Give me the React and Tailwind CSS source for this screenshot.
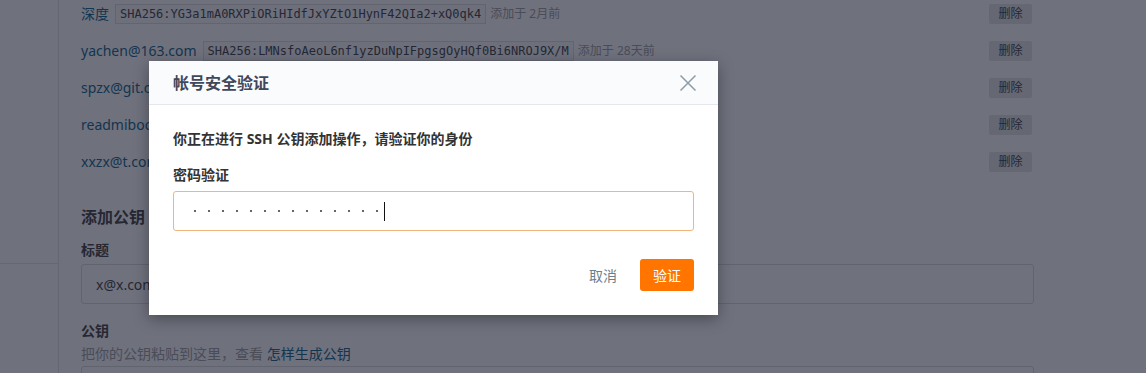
import React from 'react';

const keys = [
  { name: '深度', fp: 'SHA256:YG3a1mA0RXPiORiHIdfJxYZtO1HynF42QIa2+xQ0qk4', when: '添加于 2月前' },
  { name: 'yachen@163.com', fp: 'SHA256:LMNsfoAeoL6nf1yzDuNpIFpgsgOyHQf0Bi6NROJ9X/M', when: '添加于 28天前' },
  { name: 'spzx@git.com', fp: 'SHA256:Q2k8vD0aXbLw3mR7nT1yZpF5sHcJ9uE4oKiV6gN0tW8', when: '添加于 1年前' },
  { name: 'readmibook@qq.com', fp: 'SHA256:Hn3xT7pA0cR9sLmV2kQ8yZfW4bJ1uD6oGiE5tN0qX7c', when: '添加于 1年前' },
  { name: 'xxzx@t.com', fp: 'SHA256:Pw5yB2mK8rN0cT4vL7sQ1xZ9hF3jD6aGuE0iO2kR5nM', when: '添加于 2年前' },
];

const font = { fontFamily: '"Noto Sans", "Noto Sans CJK SC", sans-serif' };

const App = () => {
  return (
    <div className="relative w-full h-[373px] overflow-hidden bg-white text-[#333]" style={font}>
      {/* page under the dialog */}
      <div className="flex h-full">
        <aside className="w-[59px] shrink-0 border-r border-[#e3e3e3]">
          <div className="h-[264px] border-b border-[#e3e3e3]"></div>
        </aside>

        <main className="pl-[22px] w-[975px]">
          <ul className="-mt-[5px]">
            {keys.map((k) => (
              <li key={k.fp} className="h-[37px] flex items-center">
                <span className="text-[14px] text-[#005980]">{k.name}</span>
                <code className="ml-[6px] h-[20px] px-[4px] flex items-center border border-[#dcdcdc] bg-[#fafafa] text-[12px] text-[#333]" style={{ fontFamily: '"DejaVu Sans Mono", monospace' }}>
                  {k.fp}
                </code>
                <span className="ml-[4px] text-[12px] text-[#999]">{k.when}</span>
                <button className="ml-auto mr-[2px] w-[43px] h-[20px] rounded-[2px] bg-[#e2e2e2] text-[12px] text-[#333]">删除</button>
              </li>
            ))}
          </ul>

          <h3 className="mt-[25px] text-[16px] leading-[24px] font-bold">添加公钥</h3>
          <div className="mt-[11px] text-[14px] leading-[20px] font-bold">标题</div>
          <div className="mt-[4px] h-[40px] rounded-[3px] border border-[#d8d8d8] flex items-center px-[14px] text-[14px] text-[#333]">x@x.com</div>
          <div className="mt-[17px] text-[14px] leading-[20px] font-bold">公钥</div>
          <div className="mt-[3px] text-[14px] leading-[20px] text-[#999]">
            把你的公钥粘贴到这里，查看 <span className="text-[#005980]">怎样生成公钥</span>
          </div>
          <div className="mt-[2px] h-[80px] rounded-[3px] border border-[#d8d8d8]"></div>
        </main>
      </div>

      {/* dim overlay */}
      <div className="absolute inset-0 bg-[rgba(30,33,52,0.64)]"></div>

      {/* dialog */}
      <div className="absolute left-[149px] top-[61px] w-[569px] bg-white shadow-[0_4px_14px_rgba(0,0,0,0.35)]">
        <div className="h-[44px] bg-[#fafbfc] border-b border-[#e4e7eb] flex items-center justify-between pl-[24px] pr-[21px]">
          <span className="text-[16px] font-bold text-[#40485b]">帐号安全验证</span>
          <svg width="18" height="18" viewBox="0 0 18 18" fill="none" stroke="#8d9ca6" strokeWidth="1.5">
            <path d="M1.5 1.5 L16.5 16.5 M16.5 1.5 L1.5 16.5" />
          </svg>
        </div>

        <div className="px-[24px] pt-[24px] pb-[24px]">
          <p className="text-[14px] leading-[20px] font-bold text-[#333]">你正在进行 SSH 公钥添加操作，请验证你的身份</p>
          <div className="mt-[16px] text-[14px] leading-[20px] font-bold text-[#333]">密码验证</div>
          <div className="mt-[6px] h-[40px] rounded-[3px] border border-[#f3b57e] flex items-center pl-[20px]">
            <div className="flex items-center gap-[12px]">
              {Array.from({ length: 14 }).map((_, i) => (
                <span key={i} className="w-[2px] h-[2px] bg-[#666]"></span>
              ))}
            </div>
            <span className="ml-[6px] w-[1px] h-[19px] bg-[#111]"></span>
          </div>

          <div className="mt-[28px] flex justify-end items-center">
            <button className="text-[14px] text-[#6c7f8c] mr-[23px]">取消</button>
            <button className="w-[54px] h-[32px] rounded-[3px] bg-[#ff7500] text-white text-[14px]">验证</button>
          </div>
        </div>
      </div>
    </div>
  );
};

export default App;
